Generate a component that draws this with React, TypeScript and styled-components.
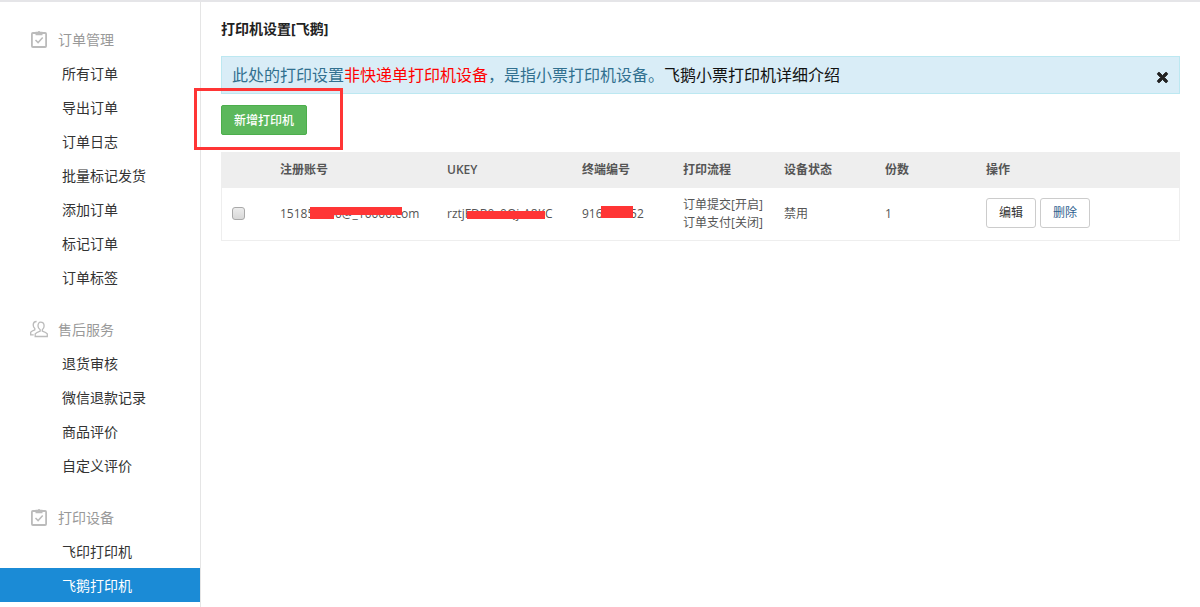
import styled, { createGlobalStyle } from "styled-components";
import { FaTimes } from "react-icons/fa";

const GlobalStyle = createGlobalStyle`
  html, body {
    margin: 0;
    padding: 0;
    background: #fff;
  }
  body {
    font-family: "Open Sans", "Noto Sans CJK SC", sans-serif;
    font-size: 12px;
    color: #555;
  }
  * {
    box-sizing: border-box;
  }
`;

const Page = styled.div`
  position: relative;
  display: flex;
  width: 1200px;
  height: 607px;
  overflow: hidden;
  border-top: 2px solid #e5e5e8;
`;

const Sidebar = styled.nav`
  flex: none;
  width: 201px;
  height: 605px;
  padding-top: 20px;
  border-right: 1px solid #e5e5e5;
`;

const Group = styled.div`
  margin-bottom: 18px;
`;

const GroupTitle = styled.div`
  display: flex;
  align-items: center;
  height: 34px;
  padding-left: 30px;
  color: #999;
  font-size: 14px;
  svg {
    margin-right: 10px;
  }
`;

const MenuItem = styled.a<{ $active?: boolean }>`
  display: block;
  height: 34px;
  padding-left: 62px;
  line-height: 36px;
  font-size: 14px;
  color: ${(p) => (p.$active ? "#fff" : "#333")};
  background: ${(p) => (p.$active ? "#1b8bd6" : "transparent")};
`;

const Main = styled.main`
  flex: 1;
  padding: 17px 20px 0 20px;
`;

const Title = styled.h1`
  margin: 0 0 17px;
  height: 20px;
  line-height: 20px;
  font-size: 14px;
  font-weight: bold;
  color: #222;
`;

const Alert = styled.div`
  display: flex;
  justify-content: space-between;
  height: 38px;
  padding: 0 10px;
  line-height: 36px;
  font-size: 16px;
  color: #31708f;
  background: #d9edf7;
  border: 1px solid #bce8f1;
  svg {
    margin: 13px -1px 0 0;
    color: #222;
    stroke: #222;
    stroke-width: 30px;
  }
`;

const Red = styled.span`
  color: #f00;
`;

const Dark = styled.span`
  color: #111;
`;

const AddButton = styled.button`
  display: block;
  width: 86px;
  height: 30px;
  margin: 11px 0 17px;
  padding: 0;
  font: inherit;
  font-size: 12px;
  font-weight: 500;
  color: #fff;
  background: #5cb85c;
  border: 1px solid #4cae4c;
  border-radius: 2px;
`;

const Table = styled.div`
  width: 959px;
  border: 1px solid #eee;
`;

const Row = styled.div<{ $head?: boolean }>`
  display: grid;
  grid-template-columns: 58px 167px 135px 101px 101px 101px 101px 1fr;
  align-items: center;
  height: ${(p) => (p.$head ? "35px" : "52px")};
  padding-bottom: ${(p) => (p.$head ? "2px" : "0")};
  background: ${(p) => (p.$head ? "#eee" : "#fff")};
  font-weight: ${(p) => (p.$head ? 600 : 400)};
  color: #555;
`;

const Cell = styled.div`
  line-height: 18px;
  white-space: nowrap;
`;

const CheckCell = styled(Cell)`
  display: flex;
  margin-bottom: 2px;
  padding-left: 10px;
`;

const Check = styled.span`
  display: block;
  width: 13px;
  height: 13px;
  background: linear-gradient(#ececec, #d8d8d8);
  border: 1px solid #a9a9a9;
  border-radius: 3px;
`;

const Masked = styled.span`
  position: relative;
  display: inline-block;
`;

const Redaction = styled.i<{ $left: number; $top: number; $width: number; $height: number }>`
  position: absolute;
  top: ${(p) => p.$top}px;
  left: ${(p) => p.$left}px;
  width: ${(p) => p.$width}px;
  height: ${(p) => p.$height}px;
  background: #ff3535;
`;

const Actions = styled(Cell)`
  display: flex;
  gap: 4px;
  margin-bottom: 2px;
`;

const SmallButton = styled.button<{ $link?: boolean }>`
  width: 50px;
  height: 30px;
  padding: 0;
  font: inherit;
  font-size: 12px;
  color: ${(p) => (p.$link ? "#2f5f8f" : "#333")};
  background: #fff;
  border: 1px solid #ccc;
  border-radius: 3px;
`;

const Annotation = styled.div`
  position: absolute;
  top: 86px;
  left: 194px;
  width: 149px;
  height: 62px;
  border: 3px solid #ff3535;
`;

const ClipboardIcon = () => (
  <svg width="18" height="18" viewBox="0 0 18 18" fill="none">
    <rect x="1.9" y="3" width="14.2" height="14" rx="1" stroke="#bbb" strokeWidth="1.8" />
    <path d="M5.5 1.8h2.2a1.4 1.4 0 0 1 2.6 0h2.2v3.4h-7z" fill="#bbb" />
    <path d="M5.5 10l2.6 2.6 4.6-5" stroke="#bbb" strokeWidth="1.5" />
  </svg>
);

const PeopleIcon = () => (
  <svg width="18" height="18" viewBox="0 0 18 18" fill="none" stroke="#bbb" strokeWidth="1.3">
    <path d="M10.5 2.2c2.2 0 3.6 1.6 3.6 3.8 0 1.7-.8 3-1.8 3.8v1.3c1.7.6 4 1.4 5 2.7v2.7H5.2v-2.7c1-1.3 3.2-2.1 5-2.7V9.8C9 9 8 7.7 8 6c0-2.2.9-3.8 2.5-3.800z" />
    <path d="M6.6 1.5C4.5 1.5 3.2 3 3.2 5.1c0 1.6.8 2.8 1.600 3.500v1.200c-1.500.5-3.100 1.200-4.100 2.400v2.600h3" />
  </svg>
);

const groups = [
  {
    title: "订单管理",
    icon: <ClipboardIcon />,
    items: ["所有订单", "导出订单", "订单日志", "批量标记发货", "添加订单", "标记订单", "订单标签"],
  },
  {
    title: "售后服务",
    icon: <PeopleIcon />,
    items: ["退货审核", "微信退款记录", "商品评价", "自定义评价"],
  },
  {
    title: "打印设备",
    icon: <ClipboardIcon />,
    items: ["飞印打印机", "飞鹅打印机"],
  },
];

function App() {
  return (
    <Page>
      <GlobalStyle />
      <Sidebar>
        {groups.map((group) => (
          <Group key={group.title}>
            <GroupTitle>
              {group.icon}
              {group.title}
            </GroupTitle>
            {group.items.map((item) => (
              <MenuItem key={item} $active={item === "飞鹅打印机"}>
                {item}
              </MenuItem>
            ))}
          </Group>
        ))}
      </Sidebar>

      <Main>
        <Title>打印机设置[飞鹅]</Title>
        <Alert>
          <span>
            此处的打印设置<Red>非快递单打印机设备</Red>，是指小票打印机设备。
            <Dark>飞鹅小票打印机详细介绍</Dark>
          </span>
          <FaTimes size={15} />
        </Alert>
        <AddButton>新增打印机</AddButton>

        <Table>
          <Row $head>
            <Cell />
            <Cell>注册账号</Cell>
            <Cell>UKEY</Cell>
            <Cell>终端编号</Cell>
            <Cell>打印流程</Cell>
            <Cell>设备状态</Cell>
            <Cell>份数</Cell>
            <Cell>操作</Cell>
          </Row>
          <Row>
            <CheckCell>
              <Check />
            </CheckCell>
            <Cell>
              <Masked>
                151850000@_10000.com
                <Redaction $left={30} $top={2} $width={24} $height={12} />
                <Redaction $left={54} $top={2} $width={68} $height={8} />
              </Masked>
            </Cell>
            <Cell>
              <Masked>
                rztjFDB0c0Qj-A8KC
                <Redaction $left={20} $top={6} $width={78} $height={8} />
              </Masked>
            </Cell>
            <Cell>
              <Masked>
                916000052
                <Redaction $left={19} $top={1} $width={32} $height={12} />
              </Masked>
            </Cell>
            <Cell>
              订单提交[开启]
              <br />
              订单支付[关闭]
            </Cell>
            <Cell>禁用</Cell>
            <Cell>1</Cell>
            <Actions>
              <SmallButton>编辑</SmallButton>
              <SmallButton $link>删除</SmallButton>
            </Actions>
          </Row>
        </Table>
      </Main>
      <Annotation />
    </Page>
  );
}

export default App;
